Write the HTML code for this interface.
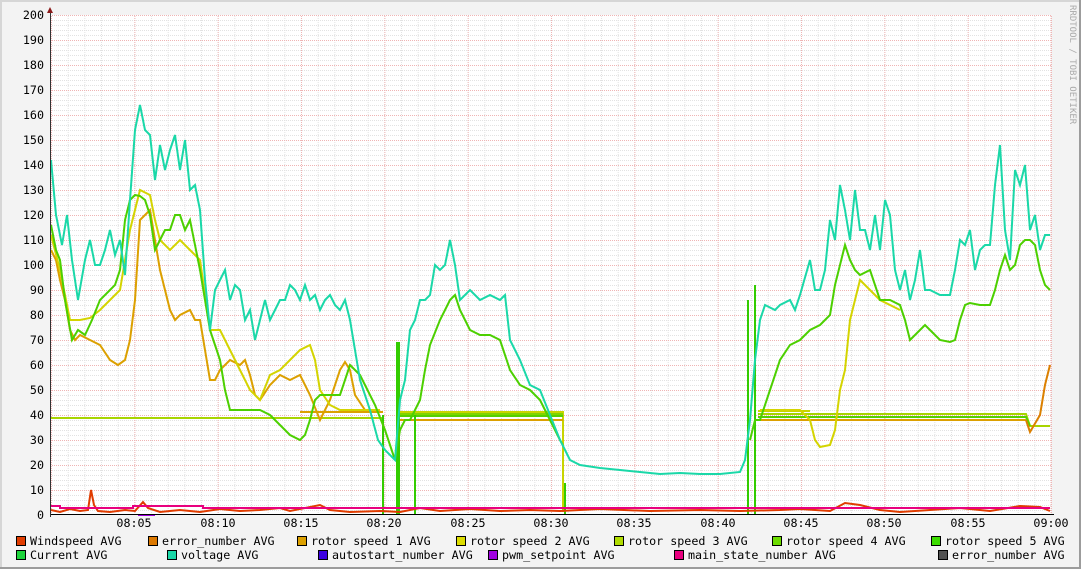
<!DOCTYPE html>
<html><head><meta charset="utf-8"><style>
body{margin:0;background:#f3f3f3;}
svg{display:block;}
text{font-family:"DejaVu Sans Mono","Liberation Mono",monospace;font-size:11.7px;fill:#000;}
</style></head><body>
<svg width="1081" height="569" viewBox="0 0 1081 569" xmlns="http://www.w3.org/2000/svg">
<defs>
<pattern id="minh" x="0" y="15" width="10" height="5" patternUnits="userSpaceOnUse">
<line x1="0" x2="10" y1="0.5" y2="0.5" stroke="#e2e2e2" stroke-dasharray="1,1"/>
</pattern>
<pattern id="minv" x="51" y="0" width="16.6667" height="10" patternUnits="userSpaceOnUse">
<line x1="0.5" x2="0.5" y1="0" y2="10" stroke="#e2e2e2" stroke-dasharray="1,1"/>
</pattern>
<pattern id="majh" x="0" y="15" width="10" height="25" patternUnits="userSpaceOnUse">
<line x1="0" x2="10" y1="0.5" y2="0.5" stroke="#efb4b4" stroke-dasharray="1,1"/>
</pattern>
<pattern id="majv" x="51" y="0" width="83.3333" height="10" patternUnits="userSpaceOnUse">
<line x1="0.5" x2="0.5" y1="0" y2="10" stroke="#efb4b4" stroke-dasharray="1,1"/>
</pattern>
</defs>
<rect x="0" y="0" width="1081" height="569" fill="#f3f3f3"/>
<rect x="0" y="0" width="1081" height="2" fill="#d6d6d6"/>
<rect x="0" y="0" width="2" height="569" fill="#d6d6d6"/>
<rect x="1079" y="0" width="2" height="569" fill="#9c9c9c"/>
<rect x="0" y="567" width="1081" height="2" fill="#9c9c9c"/>
<rect x="51" y="15" width="1000" height="500" fill="#fff"/>
<rect x="51" y="15" width="1001" height="500" fill="url(#minh)"/>
<rect x="51" y="15" width="1001" height="500" fill="url(#minv)"/>
<rect x="51" y="15" width="1001" height="500" fill="url(#majh)"/>
<rect x="51" y="15" width="1001" height="500" fill="url(#majv)"/>
<g>
<text x="44" y="19" text-anchor="end">200</text>
<text x="44" y="44" text-anchor="end">190</text>
<text x="44" y="69" text-anchor="end">180</text>
<text x="44" y="94" text-anchor="end">170</text>
<text x="44" y="119" text-anchor="end">160</text>
<text x="44" y="144" text-anchor="end">150</text>
<text x="44" y="169" text-anchor="end">140</text>
<text x="44" y="194" text-anchor="end">130</text>
<text x="44" y="219" text-anchor="end">120</text>
<text x="44" y="244" text-anchor="end">110</text>
<text x="44" y="269" text-anchor="end">100</text>
<text x="44" y="294" text-anchor="end">90</text>
<text x="44" y="319" text-anchor="end">80</text>
<text x="44" y="344" text-anchor="end">70</text>
<text x="44" y="369" text-anchor="end">60</text>
<text x="44" y="394" text-anchor="end">50</text>
<text x="44" y="419" text-anchor="end">40</text>
<text x="44" y="444" text-anchor="end">30</text>
<text x="44" y="469" text-anchor="end">20</text>
<text x="44" y="494" text-anchor="end">10</text>
<text x="44" y="519" text-anchor="end">0</text>
<text x="134" y="527" text-anchor="middle">08:05</text>
<text x="218" y="527" text-anchor="middle">08:10</text>
<text x="301" y="527" text-anchor="middle">08:15</text>
<text x="384" y="527" text-anchor="middle">08:20</text>
<text x="468" y="527" text-anchor="middle">08:25</text>
<text x="551" y="527" text-anchor="middle">08:30</text>
<text x="634" y="527" text-anchor="middle">08:35</text>
<text x="718" y="527" text-anchor="middle">08:40</text>
<text x="801" y="527" text-anchor="middle">08:45</text>
<text x="884" y="527" text-anchor="middle">08:50</text>
<text x="968" y="527" text-anchor="middle">08:55</text>
<text x="1051" y="527" text-anchor="middle">09:00</text>
</g>
<text transform="translate(1070,5) rotate(90)" style="font-size:9px;fill:#aaa">RRDTOOL / TOBI OETIKER</text>
<g fill="none" stroke-width="2" stroke-linejoin="miter">
<polyline stroke="#a8d400" points="51,418 383,418 383,512"/>
<polyline stroke="#dca000" points="300,412 383,412"/>
<polyline stroke="#c8d400" points="400,412 563,412 563,512"/>
<polyline stroke="#7fd400" points="400,414 563,414"/>
<polyline stroke="#55d000" points="400,416 563,416"/>
<polyline stroke="#dca000" points="400,420 563,420"/>
<polyline stroke="#c8d400" points="758,411 810,411"/>
<polyline stroke="#a8d400" points="758,414 1026,414 1030,426 1050,426"/>
<polyline stroke="#55d000" points="758,417 1026,417 1030,426"/>
<polyline stroke="#dca000" points="758,420 1026,420"/>
<polyline stroke="#33cc00" points="383,515 383,415"/>
<polyline stroke="#33cc00" points="397,515 397,343 399,343 399,515"/>
<polyline stroke="#33cc00" points="415,515 415,415"/>
<polyline stroke="#33cc00" points="565,515 565,483"/>
<polyline stroke="#33cc00" points="748,515 748,300"/>
<polyline stroke="#33cc00" points="755,515 755,285"/>
<polyline stroke="#dca000" points="51,250 56,260 60,280 65,300 70,330 75,340 80,335 90,340 100,345 110,360 118,365 125,360 130,340 135,300 140,220 145,215 150,210 155,240 160,270 170,310 175,320 180,315 190,310 195,320 200,320 205,350 210,380 215,380 220,370 230,360 240,365 245,360 250,375 255,395 260,400 270,385 280,375 290,380 300,375 310,395 320,420 330,400 340,370 345,362 350,370 355,395 365,410 380,410"/>
<polyline stroke="#d4d400" points="51,235 60,270 70,320 80,320 90,318 100,310 110,300 120,290 130,230 140,190 150,195 155,220 160,240 170,250 180,240 190,250 200,260 210,330 220,330 230,350 240,370 250,390 260,400 270,375 280,370 290,360 300,350 310,345 315,360 320,390 330,405 340,410 380,410"/>
<polyline stroke="#d4d400" points="760,410 800,410 810,420 815,440 820,447 830,445 835,430 840,390 845,370 850,320 855,300 860,280 870,290 880,300 900,310"/>
<polyline stroke="#dc8000" points="1026,420 1030,432 1040,415 1045,385 1050,365"/>
<polyline stroke="#4cd000" points="51,225 56,250 60,260 65,300 72,340 78,330 85,335 92,320 100,300 110,290 115,285 120,270 125,220 130,200 135,195 140,196 145,200 150,215 155,250 160,240 165,230 170,230 175,215 180,215 185,230 190,220 200,270 205,300 210,330 215,345 220,360 225,390 230,410 240,410 250,410 260,410 270,415 280,425 290,435 300,440 305,435 310,420 315,400 320,395 330,395 340,395 350,365 355,370 360,375 365,385 375,405 385,430 395,460 400,430 405,420 410,420 420,400 425,370 430,345 440,320 450,300 455,295 460,310 470,330 480,335 490,335 500,340 510,370 520,385 530,390 540,400 550,420 560,440 563,445"/>
<polyline stroke="#4cd000" points="750,440 755,420 760,420 770,390 780,360 790,345 800,340 810,330 820,325 830,315 835,285 840,265 845,245 850,260 855,270 860,275 870,270 880,300 890,300 900,305 905,320 910,340 920,330 925,325 930,330 940,340 950,342 955,340 960,320 965,305 970,303 980,305 990,305 995,290 1000,270 1005,255 1010,270 1015,265 1020,245 1025,240 1030,240 1035,245 1040,270 1045,285 1050,290"/>
<polyline stroke="#1ad8a8" points="51,160 56,215 62,245 67,215 72,260 78,300 85,260 90,240 95,265 100,265 105,250 110,230 115,255 120,240 125,275 130,200 135,130 140,105 145,130 150,135 155,180 160,145 165,170 170,150 175,135 180,170 185,140 190,190 195,185 200,210 205,280 210,330 215,290 220,280 225,270 230,300 235,285 240,290 245,320 250,310 255,340 260,320 265,300 270,320 275,310 280,300 285,300 290,285 295,290 300,300 305,285 310,300 315,295 320,310 325,300 330,295 335,305 340,310 345,300 350,320 355,350 360,380 370,410 378,440 385,450 395,460 400,400 405,380 410,330 415,320 420,300 425,300 430,295 435,265 440,270 445,265 450,240 455,265 460,300 470,290 480,300 490,295 500,300 505,295 510,340 520,360 530,385 540,390 550,415 560,440 570,460 580,465 600,468 620,470 640,472 660,474 680,473 700,474 720,474 740,472 745,460 750,420 755,360 760,320 765,305 775,310 780,305 790,300 795,310 800,295 810,260 815,290 820,290 825,270 830,220 835,240 840,185 845,210 850,240 855,190 860,230 865,230 870,250 875,215 880,250 885,200 890,215 895,270 900,290 905,270 910,300 915,280 920,250 925,290 930,290 940,295 950,295 955,270 960,240 965,245 970,230 975,270 980,250 985,245 990,245 995,185 1000,145 1005,230 1010,260 1015,170 1020,185 1025,165 1030,230 1035,215 1040,250 1045,235 1050,235"/>
<polyline stroke="#e03c00" points="51,510 60,512 70,509 80,511 88,510 91,490 94,505 98,511 110,512 125,510 135,511 143,502 148,508 160,512 180,510 200,512 220,509 240,511 260,510 280,508 290,511 320,505 330,510 350,512 380,511 400,512 420,508 440,511 470,509 500,511 530,510 560,511 600,509 650,511 700,510 740,511 780,510 800,509 830,511 845,503 860,505 880,510 900,512 930,510 960,508 990,511 1020,506 1040,507 1050,511"/>
<polyline stroke="#e8007f" points="51,506 60,506 60,508 133,508 133,506 203,506 203,508 1050,508"/>
<polyline stroke="#a000e0" points="138,515 155,515"/>
</g>
<rect x="51" y="514" width="1003" height="1" fill="#000"/>
<rect x="50" y="12" width="1" height="505" fill="#333"/>
<polygon points="47,13 53,13 50,7" fill="#8b1a1a"/>
<g>
<rect x="16.5" y="536.5" width="9" height="9" fill="#e03c00" stroke="#000"/><text x="30" y="545">Windspeed AVG</text>
<rect x="148.5" y="536.5" width="9" height="9" fill="#dc7800" stroke="#000"/><text x="162" y="545">error_number AVG</text>
<rect x="297.5" y="536.5" width="9" height="9" fill="#dca000" stroke="#000"/><text x="311" y="545">rotor speed 1 AVG</text>
<rect x="456.5" y="536.5" width="9" height="9" fill="#dcdc00" stroke="#000"/><text x="470" y="545">rotor speed 2 AVG</text>
<rect x="614.5" y="536.5" width="9" height="9" fill="#b0dc00" stroke="#000"/><text x="628" y="545">rotor speed 3 AVG</text>
<rect x="772.5" y="536.5" width="9" height="9" fill="#6cdc00" stroke="#000"/><text x="786" y="545">rotor speed 4 AVG</text>
<rect x="931.5" y="536.5" width="9" height="9" fill="#3cdc00" stroke="#000"/><text x="945" y="545">rotor speed 5 AVG</text>
<rect x="16.5" y="550.5" width="9" height="9" fill="#1ed43c" stroke="#000"/><text x="30" y="559">Current AVG</text>
<rect x="167.5" y="550.5" width="9" height="9" fill="#1ad8a8" stroke="#000"/><text x="181" y="559">voltage AVG</text>
<rect x="318.5" y="550.5" width="9" height="9" fill="#3c00e0" stroke="#000"/><text x="332" y="559">autostart_number AVG</text>
<rect x="488.5" y="550.5" width="9" height="9" fill="#a000e0" stroke="#000"/><text x="502" y="559">pwm_setpoint AVG</text>
<rect x="674.5" y="550.5" width="9" height="9" fill="#e8007f" stroke="#000"/><text x="688" y="559">main_state_number AVG</text>
<rect x="938.5" y="550.5" width="9" height="9" fill="#505050" stroke="#000"/><text x="952" y="559">error_number AVG</text>
</g>
</svg>
</body></html>
